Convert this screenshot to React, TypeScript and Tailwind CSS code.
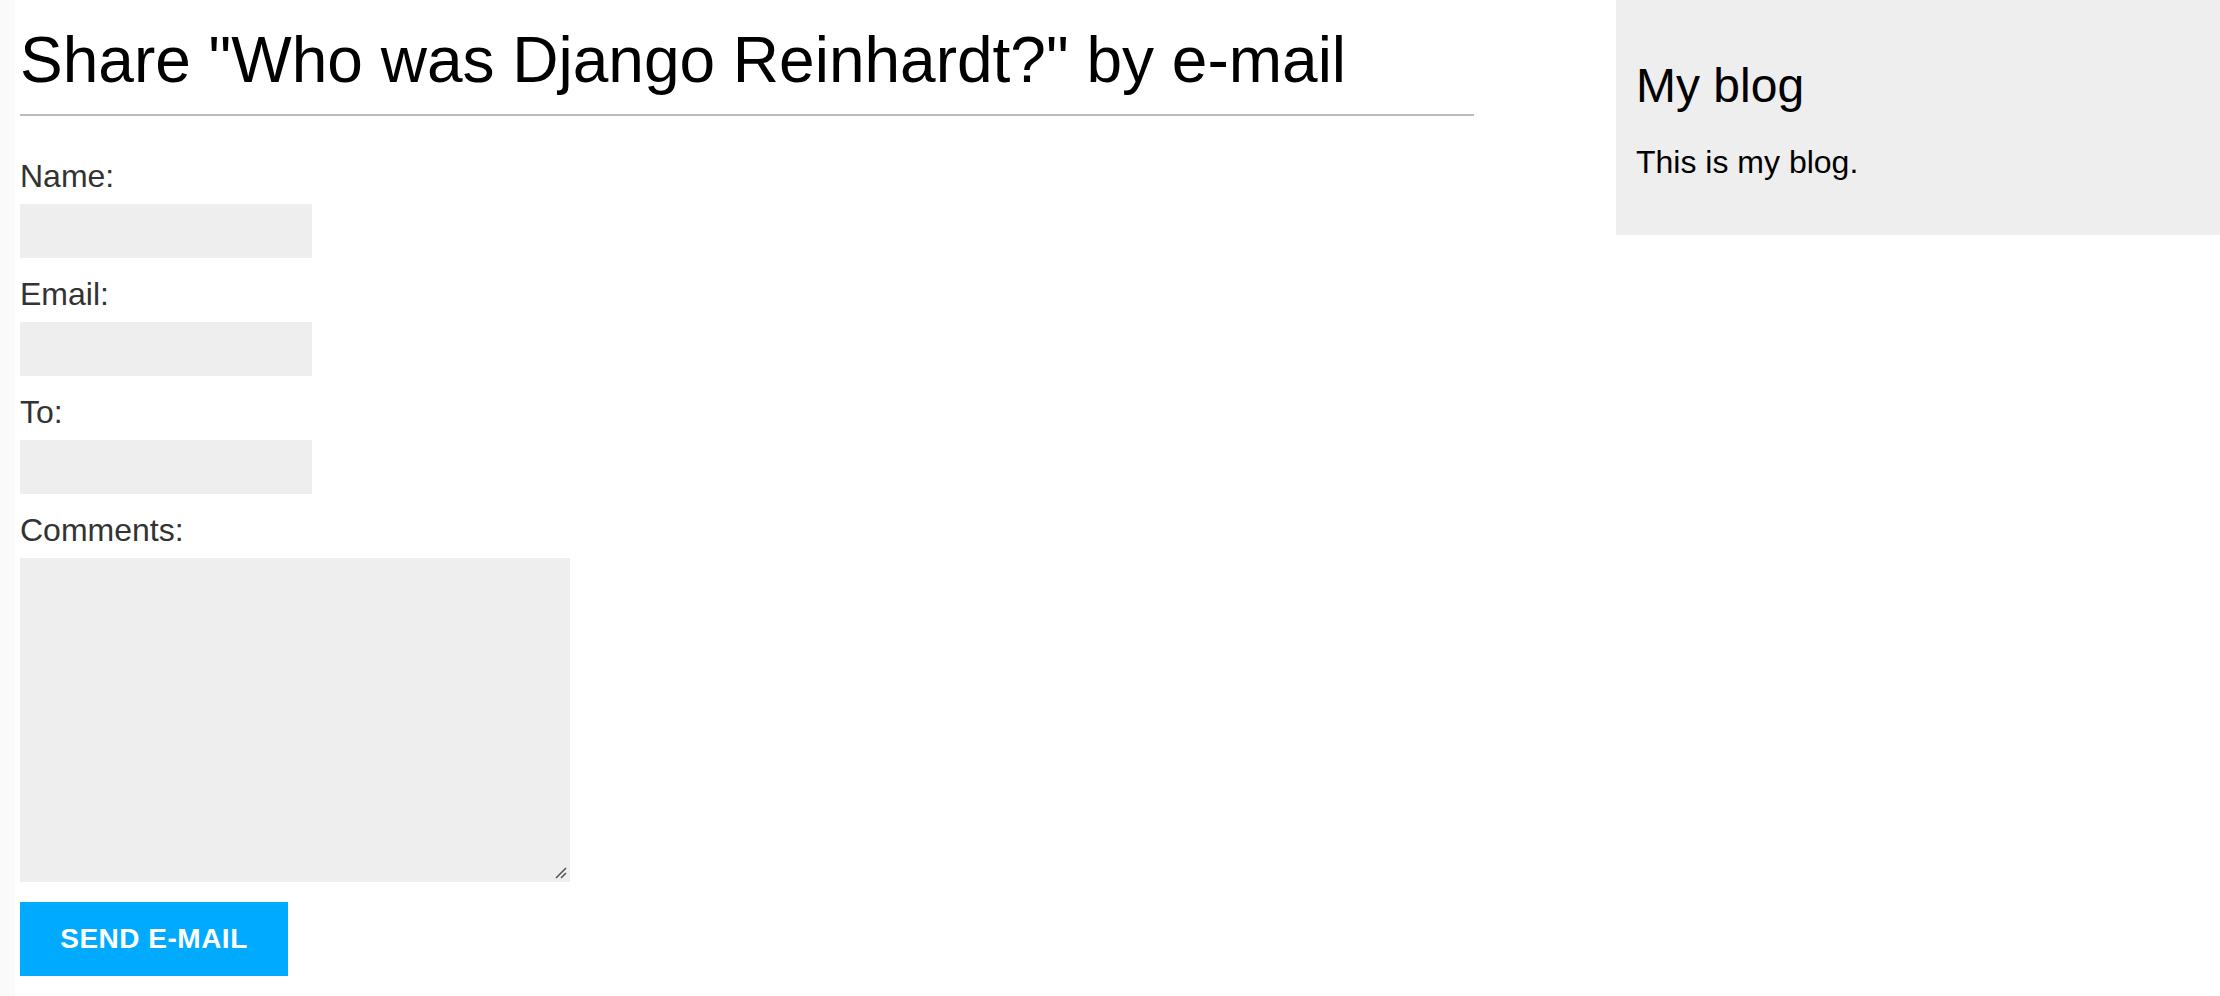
import React from "react";

export default function App() {
  const fields = ["Name:", "Email:", "To:"];
  return (
    <div
      className="flex w-full min-h-[996px] bg-white text-black"
      style={{ fontFamily: '"Liberation Sans", Arial, Helvetica, sans-serif' }}
    >
      <div className="w-[15px] shrink-0 bg-[#fafafa]" />
      <div className="w-[1459px] shrink-0 pl-[5px]">
        <h1 className="mt-[24px] text-[64px] leading-[72px] font-normal text-black border-b-2 border-[#bbbbbb] pb-[18px] w-[1454px]">
          Share "Who was Django Reinhardt?" by e-mail
        </h1>
        <form className="mt-[42px] flex flex-col" onSubmit={(e) => e.preventDefault()}>
          {fields.map((f) => (
            <div key={f} className="flex flex-col mb-[18px]">
              <label className="text-[32px] leading-[37px] h-[37px] text-[#333333]">{f}</label>
              <input
                type="text"
                className="mt-[9px] w-[292px] h-[54px] bg-[#eeeeee] border-0 outline-none px-[20px] text-[28px]"
              />
            </div>
          ))}
          <div className="flex flex-col">
            <label className="text-[32px] leading-[37px] h-[37px] text-[#333333]">Comments:</label>
            <div className="relative mt-[9px] w-[550px] h-[324px]">
              <textarea className="w-[550px] h-[324px] bg-[#eeeeee] border-0 outline-none p-[20px] text-[28px] block resize-none" />
              <svg
                className="absolute right-[2px] bottom-[2px] pointer-events-none"
                width="14"
                height="14"
                viewBox="0 0 14 14"
              >
                <line x1="2" y1="12" x2="12" y2="2" stroke="#555" strokeWidth="1.6" />
                <line x1="7" y1="12" x2="12" y2="7" stroke="#555" strokeWidth="1.6" />
              </svg>
            </div>
          </div>
          <button
            type="submit"
            className="mt-[20px] w-[268px] h-[74px] bg-[#00abff] text-white font-bold uppercase text-[28px] leading-[32px] tracking-[0.5px] flex items-center justify-center"
          >
            Send e-mail
          </button>
        </form>
      </div>
      <div className="flex-1" />
      <aside className="w-[604px] shrink-0 self-start bg-[#eeeeee] pl-[20px] pt-[58px] pb-[54px]">
        <h2 className="text-[48px] leading-[55px] font-normal text-black">My blog</h2>
        <p className="mt-[31px] text-[32px] leading-[37px] text-black">This is my blog.</p>
      </aside>
    </div>
  );
}
